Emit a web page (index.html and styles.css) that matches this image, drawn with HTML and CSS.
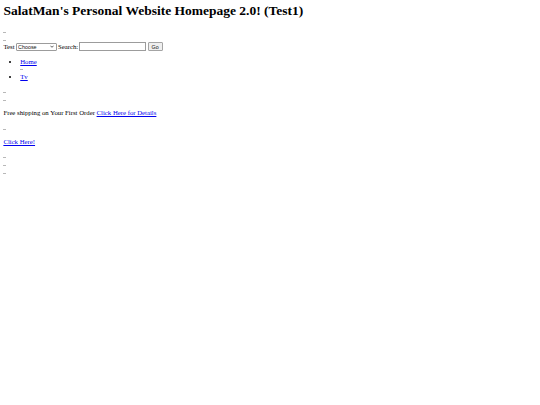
FILE: index.html
```html
<!DOCTYPE html>
<html lang="en">
<head>
<meta charset="utf-8">
<title>SalatMan's Personal Website Homepage 2.0!</title>
<link rel="stylesheet" href="styles.css">
</head>
<body>
<h1 class="title">SalatMan's Personal Website Homepage 2.0! (Test1)</h1>
<div class="mark gap-a"></div>
<div class="mark gap-b"></div>
<form class="search-row">
  <span class="label">Test</span>
  <span class="select-wrap">
    <select class="choose"><option>Choose</option></select>
    <svg class="chev" viewBox="0 0 6 4" width="4" height="3" aria-hidden="true"><path d="M0.6 0.8 L3 3.2 L5.4 0.8" fill="none" stroke="#222" stroke-width="1.1"/></svg>
  </span>
  <span class="label">Search:</span>
  <input class="search-input" type="text">
  <button class="go" type="button">Go</button>
</form>
<ul class="nav">
  <li><a href="#">Home</a><div class="mark li-mark"></div></li>
  <li><a href="#">Tv</a></li>
</ul>
<div class="mark gap-c"></div>
<div class="mark gap-b"></div>
<p class="promo">Free shipping on Your First Order <a href="#">Click Here for Details</a></p>
<div class="mark gap-c"></div>
<p class="promo"><a href="#">Click Here!</a></p>
<div class="mark gap-c"></div>
<div class="mark gap-b"></div>
<div class="mark gap-d"></div>
</body>
</html>
```
FILE: styles.css
```css
html { background: #fff; }
body {
  margin: 3.375px;
  font-family: "Liberation Serif", "Times New Roman", serif;
  font-size: 6.75px;
  line-height: 7.75px;
  color: #000;
}
a { color: #0000ee; text-decoration: underline; }

.title {
  margin: 0;
  font-size: 13.5px;
  line-height: 15.5px;
  font-weight: bold;
}

.mark {
  width: 3px;
  height: 1px;
  background: #b8b8b8;
}
.gap-a { margin-top: 13.4px; }
.gap-b { margin-top: 7px; }
.gap-c { margin-top: 11.7px; }
.gap-d { margin-top: 6.6px; }

.search-row {
  display: flex;
  align-items: center;
  height: 8.4px;
  margin: 1.2px 0 0;
}
.label { line-height: 7.75px; }
.select-wrap {
  position: relative;
  display: inline-block;
  height: 8px;
  margin: 0 1.4px 0 1px;
}
.choose {
  -webkit-appearance: none;
  appearance: none;
  box-sizing: border-box;
  display: block;
  width: 41px;
  height: 8px;
  margin: 0;
  padding: 0 0 0 1.5px;
  font-family: "Liberation Sans", Arial, sans-serif;
  font-size: 5.4px;
  line-height: 6px;
  border: 1px solid #9c9c9c;
  border-radius: 1px;
  background: #fff;
  color: #111;
}
.chev {
  position: absolute;
  right: 3px;
  top: 2.6px;
}
.search-input {
  box-sizing: border-box;
  width: 66.5px;
  height: 8.6px;
  margin: 0 0 0 1.2px;
  padding: 0;
  border: 1px solid #9c9c9c;
  border-radius: 0;
  background: #fff;
}
.go {
  box-sizing: border-box;
  width: 15px;
  height: 8.4px;
  margin: 0 0 0 1.8px;
  padding: 0;
  font-family: "Liberation Sans", Arial, sans-serif;
  font-size: 5.4px;
  line-height: 6px;
  border: 1px solid #a4a4a4;
  border-radius: 1px;
  background: #efefef;
  color: #111;
}

.nav {
  margin: 7.2px 0 0;
  padding-left: 16.875px;
  list-style: disc;
}
.li-mark { margin: 3.4px 0 2.8px; }

.promo { margin: 7.85px 0 0; }
```
